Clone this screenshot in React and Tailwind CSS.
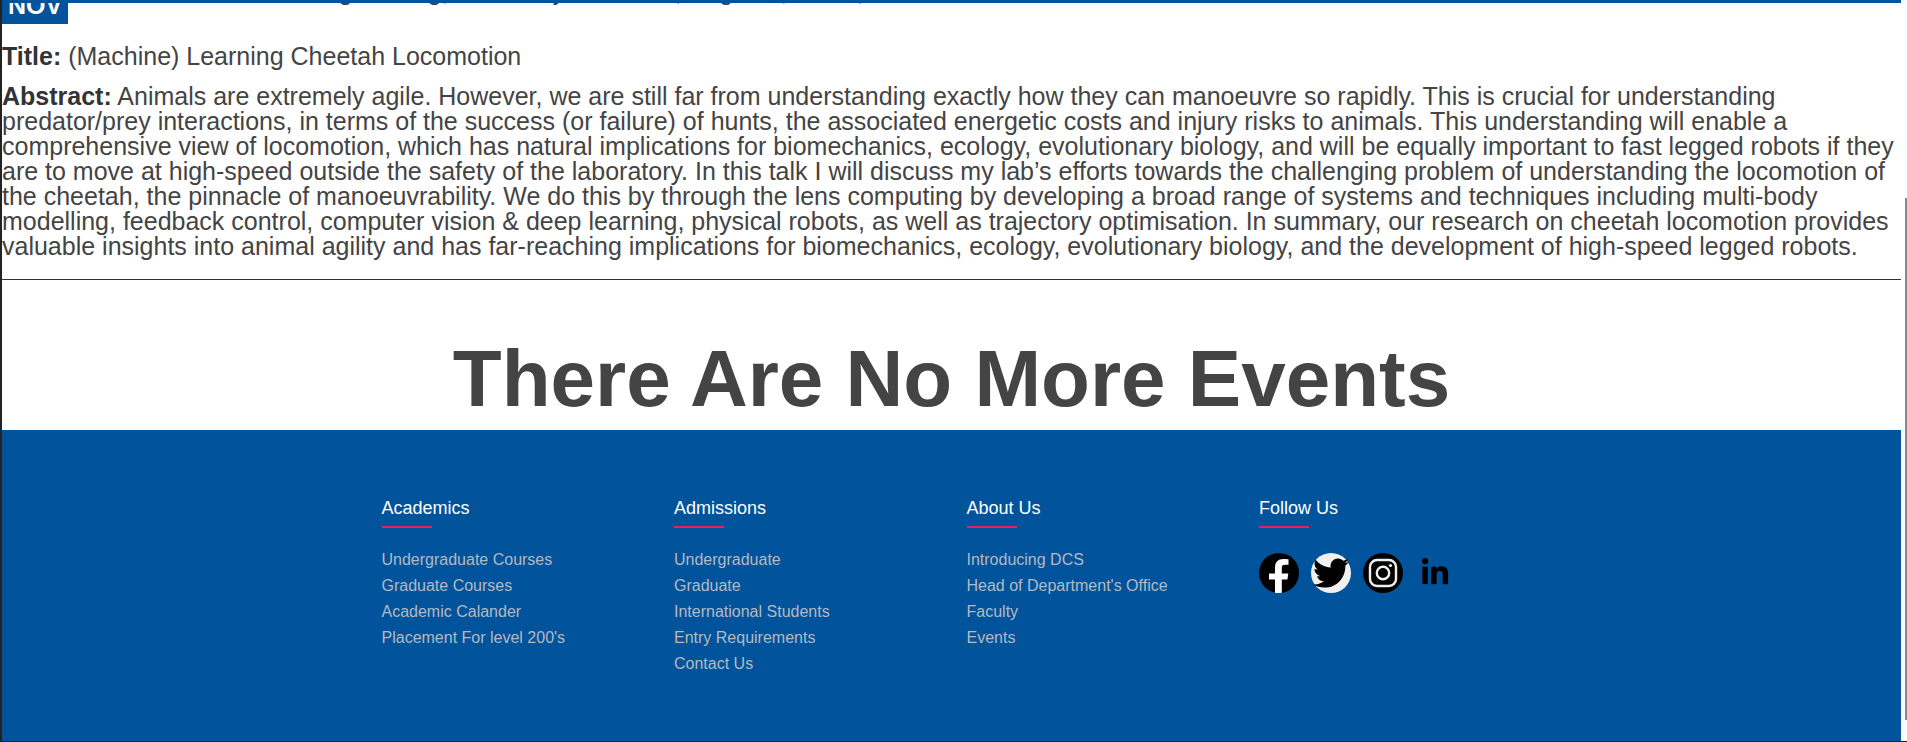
import React from "react";
import { FaTwitter, FaLinkedinIn } from "react-icons/fa";

const columns = [
  { title: "Academics", links: ["Undergraduate Courses", "Graduate Courses", "Academic Calander", "Placement For level 200's"] },
  { title: "Admissions", links: ["Undergraduate", "Graduate", "International Students", "Entry Requirements", "Contact Us"] },
  { title: "About Us", links: ["Introducing DCS", "Head of Department's Office", "Faculty", "Events"] },
];

function Heading({ children }) {
  return (
    <div>
      <h4 className="text-[18px] leading-[20px] text-white">{children}</h4>
      <div className="mt-[8px] h-[2px] w-[50px] bg-[#e91e63]" />
    </div>
  );
}

function Social() {
  return (
    <div className="mt-[25px] flex items-center gap-[12px]">
      <svg width="40" height="40" viewBox="0 0 40 40">
        <circle cx="20" cy="20" r="20" fill="#000" />
        <path fill="#fff" d="M16 40V26.500h-6v-6h6v-6c0-5.500 3.200-8.500 8.200-8.500 2.200 0 4.200.2 5.300.3v5.400h-3.500c-2.400 0-3.200 1.200-3.200 3.100v5.700h6.500l-.9 6h-5.600v13.200a20 20 0 0 1-6.800.3z" />
      </svg>
      <span className="flex h-[40px] w-[40px] items-center justify-center rounded-full bg-[#f0f0f0]">
        <FaTwitter className="text-black" size={36} />
      </span>
      <svg width="40" height="40" viewBox="0 0 40 40">
        <circle cx="20" cy="20" r="20" fill="#000" />
        <rect x="7" y="7" width="26" height="26" rx="7" fill="none" stroke="#f0f0f0" strokeWidth="2.400" />
        <circle cx="20" cy="20" r="6.200" fill="none" stroke="#f0f0f0" strokeWidth="2.400" />
        <circle cx="27.500" cy="12.500" r="1.600" fill="#f0f0f0" />
      </svg>
      <FaLinkedinIn className="ml-[5px] text-black" size={30} />
    </div>
  );
}

export default function App() {
  return (
    <div className="relative flex h-[742px] w-full overflow-hidden border-b border-l-2 border-[#222] bg-white font-['Liberation_Sans',Arial,sans-serif] text-[#444]">
      <div className="flex min-w-0 flex-1 flex-col">
        <div className="h-[3px] shrink-0 bg-[#01539b]" />
        <div className="flex h-[21px] shrink-0 items-start overflow-hidden">
          <div className="flex h-[21px] w-[66px] shrink-0 items-end justify-center bg-[#01539b] pb-[6px]">
            <span className="text-[25px] font-bold leading-[25px] text-white">NOV</span>
          </div>
          <p className="-mt-[24px] ml-[240px] whitespace-nowrap text-[25px] leading-[25px]">
            Engineering, University of Oxford, England, Africa,
          </p>
        </div>
        <p className="mt-[19px] text-[25px] leading-[27px]">
          <strong className="text-[#333]">Title:</strong> (Machine) Learning Cheetah Locomotion
        </p>
        <p className="mt-[14px] text-[25px] leading-[25px]">
          <strong className="text-[#333]">Abstract:</strong> Animals are extremely agile. However, we are still far from understanding exactly how they can manoeuvre so rapidly. This is crucial for understanding predator/prey interactions, in terms of the success (or failure) of hunts, the associated energetic costs and injury risks to animals. This understanding will enable a comprehensive view of locomotion, which has natural implications for biomechanics, ecology, evolutionary biology, and will be equally important to fast legged robots if they are to move at high-speed outside the safety of the laboratory. In this talk I will discuss my lab’s efforts towards the challenging problem of understanding the locomotion of the cheetah, the pinnacle of manoeuvrability. We do this by through the lens computing by developing a broad range of systems and techniques including multi-body modelling, feedback control, computer vision &amp; deep learning, physical robots, as well as trajectory optimisation. In summary, our research on cheetah locomotion provides valuable insights into animal agility and has far-reaching implications for biomechanics, ecology, evolutionary biology, and the development of high-speed legged robots.
        </p>
        <hr className="mt-[20px] border-t border-[#333]" />
        <h1 className="mt-[55px] text-center text-[80px] font-bold leading-[88px] text-[#444]">There Are No More Events</h1>
        <footer className="mt-[7px] flex-1 bg-[#01539b]">
          <div className="mx-auto flex w-[1170px] pt-[68px]">
            {columns.map((col) => (
              <div key={col.title} className="w-[292.5px] px-[15px]">
                <Heading>{col.title}</Heading>
                <ul className="mt-[19px]">
                  {col.links.map((l) => (
                    <li key={l} className="text-[16px] leading-[26px] text-[#b3bac2]">{l}</li>
                  ))}
                </ul>
              </div>
            ))}
            <div className="w-[292.5px] px-[15px]">
              <Heading>Follow Us</Heading>
              <Social />
            </div>
          </div>
        </footer>
      </div>
      <div className="relative w-[6px] shrink-0 bg-white">
        <div className="absolute right-0 top-[198px] h-[522px] w-[2px] bg-[#8a8a8a]" />
      </div>
    </div>
  );
}
